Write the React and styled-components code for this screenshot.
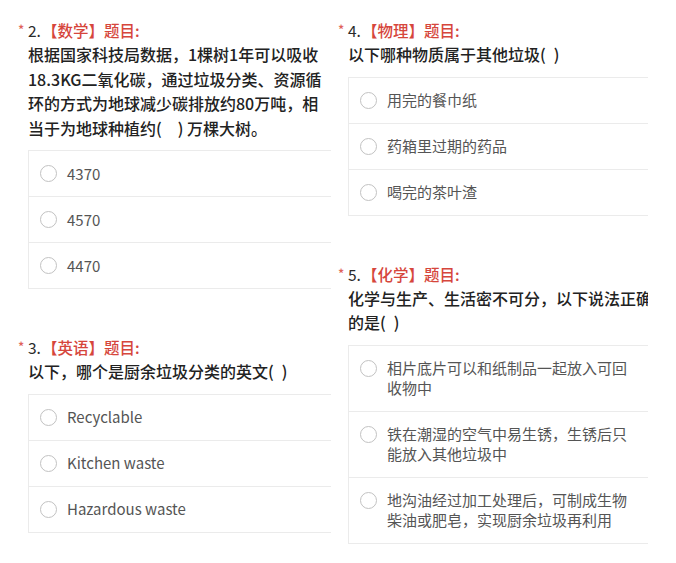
import React from "react";
import styled, { createGlobalStyle } from "styled-components";

const Global = createGlobalStyle`
  html, body { margin: 0; padding: 0; background: #ffffff; }
  body {
    font-family: "Noto Sans CJK SC", "Noto Sans", sans-serif;
    -webkit-font-smoothing: antialiased;
  }
`;

const Page = styled.div`
  display: grid;
  grid-template-columns: 313px 310px;
  column-gap: 7px;
  padding: 18px 0 0 18px;
  align-items: start;
`;

const Column = styled.div`
  display: flex;
  flex-direction: column;
  gap: 46px;
  overflow: hidden;
`;

const Section = styled.section`
  display: flex;
  flex-direction: column;
`;

const TitleRow = styled.div`
  display: flex;
  align-items: center;
  height: 24px;
  font-size: 15.5px;
  font-weight: 500;
  line-height: 24px;
`;

const Star = styled.span`
  width: 10px;
  flex-shrink: 0;
  color: #e0625a;
  font-size: 13px;
  line-height: 1;
  margin-top: -1px;
`;

const Num = styled.span`
  color: #2a2a2a;
  font-weight: 400;
  margin-right: 1px;
`;

const Subject = styled.span`
  color: #d6463c;
`;

const Question = styled.p`
  margin: 0;
  padding-left: 10px;
  width: ${(p) => p.$width}px;
  box-sizing: border-box;
  font-size: 16px;
  font-weight: 500;
  line-height: 24.5px;
  color: #222222;
`;

const Options = styled.div`
  margin: 10px -14px 0 10px;
  border: 1px solid #ebebeb;
  display: flex;
  flex-direction: column;
`;

const Option = styled.div`
  display: flex;
  align-items: flex-start;
  gap: 10px;
  padding: 12.5px 15px 12.5px 11px;
  ${(p) => (p.$first ? "" : "border-top: 1px solid #ebebeb;")}
`;

const Radio = styled.span`
  width: 17px;
  height: 17px;
  box-sizing: border-box;
  border: 1px solid #c2c2c2;
  border-radius: 50%;
  flex-shrink: 0;
  margin-top: 1.5px;
  background: #fff;
`;

const Label = styled.span`
  width: ${(p) => (p.$width ? `${p.$width}px` : "auto")};
  font-size: 15px;
  line-height: 20px;
  color: #555555;
`;

const data = {
  left: [
    {
      n: "2.",
      subject: "【数学】题目:",
      q: "根据国家科技局数据，1棵树1年可以吸收18.3KG二氧化碳，通过垃圾分类、资源循环的方式为地球减少碳排放约80万吨，相当于为地球种植约(\u3000) 万棵大树。",
      width: 310,
      options: ["4370", "4570", "4470"],
    },
    {
      n: "3.",
      subject: "【英语】题目:",
      q: "以下，哪个是厨余垃圾分类的英文(\u2002)",
      width: 310,
      options: ["Recyclable", "Kitchen waste", "Hazardous waste"],
    },
  ],
  right: [
    {
      n: "4.",
      subject: "【物理】题目:",
      q: "以下哪种物质属于其他垃圾(\u2002)",
      width: 316,
      options: ["用完的餐巾纸", "药箱里过期的药品", "喝完的茶叶渣"],
    },
    {
      n: "5.",
      subject: "【化学】题目:",
      q: "化学与生产、生活密不可分，以下说法正确的是(\u2002)",
      width: 316,
      options: [
        "相片底片可以和纸制品一起放入可回收物中",
        "铁在潮湿的空气中易生锈，生锈后只能放入其他垃圾中",
        "地沟油经过加工处理后，可制成生物柴油或肥皂，实现厨余垃圾再利用",
      ],
      labelWidth: 248,
    },
  ],
};

function QuestionBlock({ item }) {
  return (
    <Section>
      <TitleRow>
        <Star>*</Star>
        <Num>{item.n}</Num>
        <Subject>{item.subject}</Subject>
      </TitleRow>
      <Question $width={item.width}>{item.q}</Question>
      <Options>
        {item.options.map((o, i) => (
          <Option key={o} $first={i === 0}>
            <Radio />
            <Label $width={item.labelWidth}>{o}</Label>
          </Option>
        ))}
      </Options>
    </Section>
  );
}

export default function App() {
  return (
    <>
      <Global />
      <Page>
        <Column>
          {data.left.map((it) => (
            <QuestionBlock key={it.n} item={it} />
          ))}
        </Column>
        <Column>
          {data.right.map((it) => (
            <QuestionBlock key={it.n} item={it} />
          ))}
        </Column>
      </Page>
    </>
  );
}
